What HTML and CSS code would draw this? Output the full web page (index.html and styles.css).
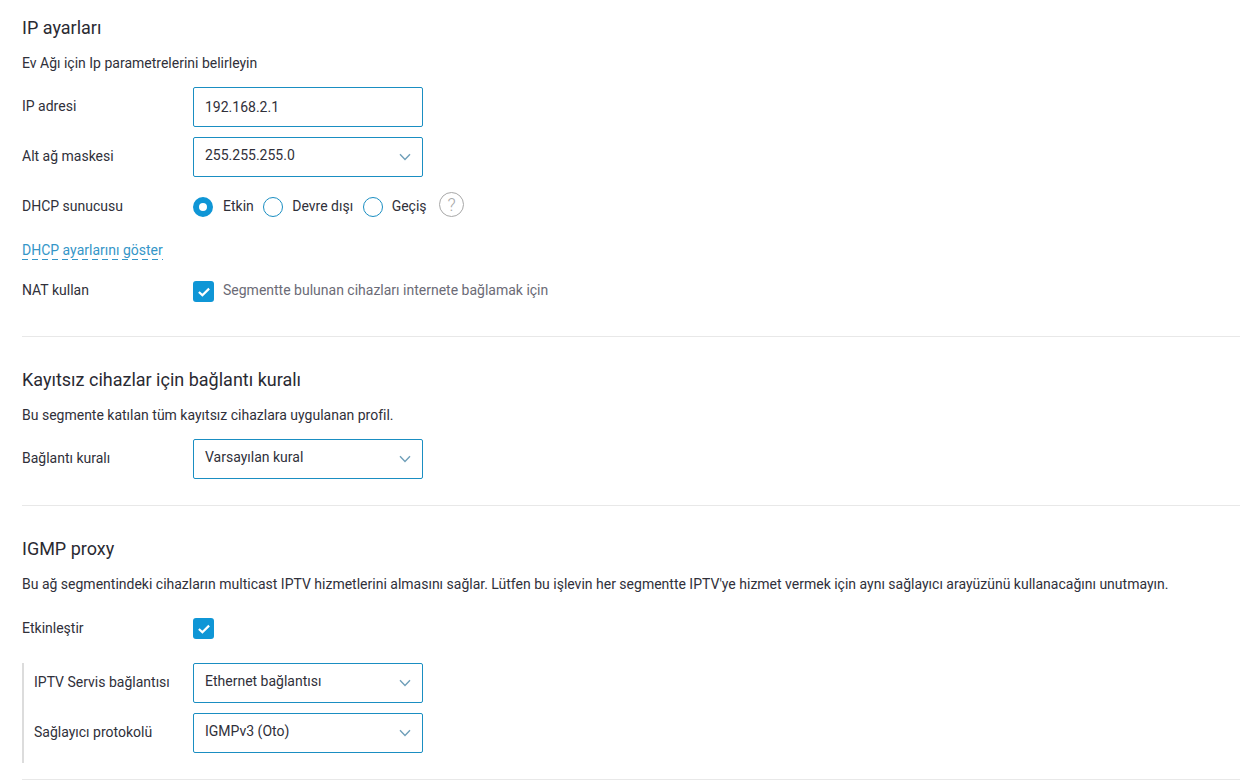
FILE: index.html
```html
<!DOCTYPE html>
<html lang="tr">
<head>
<meta charset="utf-8">
<title>IP ayarları</title>
<link rel="stylesheet" href="styles.css">
</head>
<body>
<svg class="defs" width="0" height="0" aria-hidden="true">
  <symbol id="chev" viewBox="0 0 12 8"><path d="M1 1.2 6 6.4 11 1.2" fill="none" stroke="#6f9fb9" stroke-width="1.4"/></symbol>
  <symbol id="tick" viewBox="0 0 12 10"><path d="M.9 5 4.4 8.3 11.1 1.6" fill="none" stroke="#fff" stroke-width="2.2"/></symbol>
</svg>
<main class="page">
  <section class="section first">
    <h2 class="title">IP ayarları</h2>
    <p class="desc">Ev Ağı için Ip parametrelerini belirleyin</p>
    <div class="row">
      <span class="label">IP adresi</span>
      <div class="field input">192.168.2.1</div>
    </div>
    <div class="row">
      <span class="label">Alt ağ maskesi</span>
      <div class="field select">255.255.255.0<svg class="chev"><use href="#chev"/></svg></div>
    </div>
    <div class="row">
      <span class="label">DHCP sunucusu</span>
      <div class="radios">
        <span class="radio on"></span><span class="opt">Etkin</span>
        <span class="radio"></span><span class="opt">Devre dışı</span>
        <span class="radio"></span><span class="opt">Geçiş</span>
        <span class="help">?</span>
      </div>
    </div>
    <div class="linkrow"><a class="link">DHCP ayarlarını göster</a></div>
    <div class="row nat">
      <span class="label">NAT kullan</span>
      <span class="check"><svg class="tick"><use href="#tick"/></svg></span>
      <span class="hint">Segmentte bulunan cihazları internete bağlamak için</span>
    </div>
  </section>

  <section class="section second">
    <h2 class="title">Kayıtsız cihazlar için bağlantı kuralı</h2>
    <p class="desc">Bu segmente katılan tüm kayıtsız cihazlara uygulanan profil.</p>
    <div class="row">
      <span class="label">Bağlantı kuralı</span>
      <div class="field select">Varsayılan kural<svg class="chev"><use href="#chev"/></svg></div>
    </div>
  </section>

  <section class="section third">
    <h2 class="title">IGMP proxy</h2>
    <p class="desc">Bu ağ segmentindeki cihazların multicast IPTV hizmetlerini almasını sağlar. Lütfen bu işlevin her segmentte IPTV'ye hizmet vermek için aynı sağlayıcı arayüzünü kullanacağını unutmayın.</p>
    <div class="row toggle">
      <span class="label">Etkinleştir</span>
      <span class="check"><svg class="tick"><use href="#tick"/></svg></span>
    </div>
    <div class="nested">
      <div class="row">
        <span class="label">IPTV Servis bağlantısı</span>
        <div class="field select">Ethernet bağlantısı<svg class="chev"><use href="#chev"/></svg></div>
      </div>
      <div class="row">
        <span class="label">Sağlayıcı protokolü</span>
        <div class="field select">IGMPv3 (Oto)<svg class="chev"><use href="#chev"/></svg></div>
      </div>
    </div>
  </section>
</main>
</body>
</html>
```
FILE: styles.css
```css
* { box-sizing: border-box; }
html, body { margin: 0; padding: 0; background: #fff; overflow: hidden; }
body { width: 1240px; height: 783px; font-family: Roboto, "Liberation Sans", sans-serif; font-size: 14px; color: #30303a; }
.defs { position: absolute; }
.page { padding-left: 22px; }
.section { border-bottom: 1px solid #e8e8e8; }
.first { padding-top: 17px; height: 337px; }
.second { padding-top: 32px; height: 169px; }
.third { padding-top: 32px; height: 274px; }
.title { margin: 0; font-size: 18px; font-weight: 400; line-height: 22px; color: #2a2a32; }
.desc { margin: 15px 0 0; font-size: 14px; line-height: 18px; }
.row { display: flex; align-items: center; height: 40px; margin-top: 10px; }
.desc + .row { margin-top: 15px; }
.label { width: 171px; flex: none; line-height: 18px; margin-top: -2px; }
.toggle .label { margin-top: 0; }
.field { position: relative; width: 230px; height: 40px; border: 1px solid #1a8ec2; border-radius: 2px; padding-left: 11px; line-height: 34px; background: #fff; }
.input { line-height: 38px; }
.chev { position: absolute; right: 11px; top: 15px; width: 12px; height: 8px; }
.radios { display: flex; align-items: center; }
.radio { width: 20px; height: 20px; border: 1px solid #1a8ec2; border-radius: 50%; flex: none; }
.radio.on { border: 6px solid #0f96d6; background: #fff; margin-right: 1px; }
.opt { margin-left: 9px; margin-right: 9.5px; line-height: 18px; margin-top: -2px; }
.help { width: 25px; height: 25px; margin-left: 3px; margin-top: -5px; border: 1px solid #a8a8a8; border-radius: 50%; color: #a8a8a8; font-size: 18px; line-height: 23px; text-align: center; font-weight: 300; }
.linkrow { height: 20px; margin-top: 14px; }
.link { display: inline-block; line-height: 18px; padding-bottom: 1px; color: #3596c8; background: linear-gradient(to right, #3596c8 6px, transparent 6px) left bottom / 10px 1px repeat-x; }
.check { width: 21px; height: 21px; background: #0f96d6; border-radius: 3px; display: flex; align-items: center; justify-content: center; flex: none; margin-top: 1px; }
.tick { width: 12px; height: 10px; }
.hint { margin-left: 9px; color: #6b6b76; line-height: 18px; margin-top: -2px; }
.nested { margin-top: 15px; height: 100px; border-left: 2px solid #dcdcdc; padding-left: 10px; }
.nested .row:first-child { margin-top: 0; }
.nested .label { width: 159px; }
```
